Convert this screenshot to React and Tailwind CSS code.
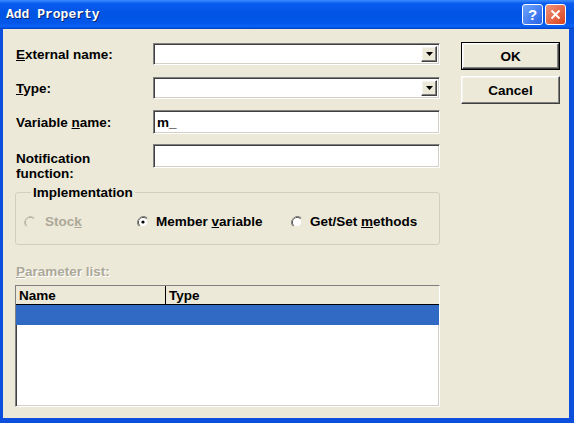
import React from 'react';

const sunken =
  'border border-t-[#808080] border-l-[#808080] border-b-white border-r-white shadow-[inset_1px_1px_0_#404040,inset_-1px_-1px_0_#d4d0c8]';
const raised =
  'border border-t-white border-l-white border-b-[#404040] border-r-[#404040] shadow-[inset_-1px_-1px_0_#808080,inset_1px_1px_0_#f4f3ee]';

function Radio({ checked, disabled }) {
  return (
    <svg width="12" height="12" viewBox="0 0 12 12" className="shrink-0">
      <path d="M10.2 1.8 A6 6 0 0 0 1.8 10.2" fill="none" stroke={disabled ? '#c5c2b2' : '#808080'} strokeWidth="1" />
      <path d="M9.5 2.5 A5 5 0 0 0 2.5 9.5" fill="none" stroke={disabled ? '#aca899' : '#404040'} strokeWidth="1" />
      <circle cx="6" cy="6" r="4" fill={disabled ? '#ece9d8' : '#ffffff'} />
      {checked && <circle cx="6" cy="6" r="1.6" fill="#000" />}
    </svg>
  );
}

function Combo() {
  return (
    <div className={`w-[287px] h-[22px] bg-white flex justify-end items-stretch p-[2px] ${sunken}`}>
      <div className={`w-[16px] bg-[#ece9d8] flex items-center justify-center ${raised}`}>
        <svg width="7" height="4" viewBox="0 0 7 4">
          <path d="M0 0 H7 L3.5 4 Z" fill="#000" />
        </svg>
      </div>
    </div>
  );
}

function Edit({ value }) {
  return (
    <div className={`w-[287px] h-[24px] bg-white flex items-center px-[3px] text-black ${sunken}`}>
      {value}
    </div>
  );
}

export default function App() {
  return (
    <div className="w-[574px] h-[423px] bg-[#0b4fdc] flex flex-col font-['Liberation_Sans',Arial,sans-serif] text-[13.5px] font-bold leading-[15px] text-black">
      {/* Title bar */}
      <div className="h-[29px] shrink-0 flex items-center pl-[6px] pr-[8px] bg-[linear-gradient(180deg,#3d8bff_0%,#0a5cf0_12%,#0054e3_45%,#0257ea_80%,#0a63f6_90%,#0041c8_100%)]">
        <span className="font-['Liberation_Mono',monospace] text-[13px] text-white [text-shadow:1px_1px_0_#0a246a]">
          Add Property
        </span>
        <div className="ml-auto flex gap-[2px]">
          <div className="w-[21px] h-[21px] rounded-[3px] border border-white bg-[linear-gradient(135deg,#6fa5ff,#2662e6)] flex items-center justify-center text-white text-[15px] font-bold">
            ?
          </div>
          <div className="w-[21px] h-[21px] rounded-[3px] border border-white bg-[linear-gradient(135deg,#f0937a,#d9421b)] flex items-center justify-center">
            <svg width="11" height="11" viewBox="0 0 11 11">
              <path d="M1.5 1.5 L9.5 9.5 M9.5 1.5 L1.5 9.5" stroke="#fff" strokeWidth="2" />
            </svg>
          </div>
        </div>
      </div>

      {/* Body */}
      <div className="flex-1 ml-[3px] mr-[5px] mb-[5px] bg-[#ece9d8] flex items-start pl-[12px] pt-[13px]">
        <div className="w-[425px] pt-[1px] flex flex-col">
          <div className="flex items-center h-[22px]">
            <span className="w-[138px] pl-[1px]"><u>E</u>xternal name:</span>
            <Combo />
          </div>
          <div className="flex items-center h-[22px] mt-[12px]">
            <span className="w-[138px] pl-[1px]"><u>T</u>ype:</span>
            <Combo />
          </div>
          <div className="flex items-center h-[24px] mt-[11px]">
            <span className="w-[138px] pl-[1px]">Variable <u>n</u>ame:</span>
            <Edit value="m_" />
          </div>
          <div className="flex items-start h-[24px] mt-[10px]">
            <span className="w-[138px] pl-[1px] pt-[7px]">Notification<br />function:</span>
            <Edit value="" />
          </div>

          <fieldset className="mt-[17px] border border-[#d0d0bf] rounded-[3px] px-[8px]">
            <legend className="ml-[7px] px-[2px]">Implementation</legend>
            <div className="flex items-center h-[44px] pb-[1px]">
              <div className="w-[113px] flex items-center gap-[9px] text-[#aca899]">
                <Radio disabled />
                <span>Stoc<u>k</u></span>
              </div>
              <div className="w-[154px] flex items-center gap-[7px]">
                <Radio checked />
                <span>Member <u>v</u>ariable</span>
              </div>
              <div className="flex items-center gap-[7px]">
                <Radio />
                <span>Get/Set <u>m</u>ethods</span>
              </div>
            </div>
          </fieldset>

          <div className="mt-[19px] pl-[1px] text-[#aca899] [text-shadow:1px_1px_0_#fff]">
            <u>P</u>arameter list:
          </div>

          <div className={`mt-[6px] h-[122px] bg-white flex flex-col ${sunken}`}>
            <div className="h-[19px] flex bg-[#ece9d8] border-b border-black">
              <div className="w-[150px] px-[3px] flex items-center border-r border-black">Name</div>
              <div className="flex-1 px-[3px] flex items-center">Type</div>
            </div>
            <div className="h-[20px] bg-[#316ac5]" />
          </div>
        </div>

        <div className="ml-[21px] w-[99px] flex flex-col gap-[6px]">
          <div className="h-[28px] border border-black">
            <div className={`h-full bg-[#ece9d8] flex items-center justify-center ${raised}`}>OK</div>
          </div>
          <div className={`h-[28px] bg-[#ece9d8] flex items-center justify-center ${raised}`}>Cancel</div>
        </div>
      </div>
    </div>
  );
}
